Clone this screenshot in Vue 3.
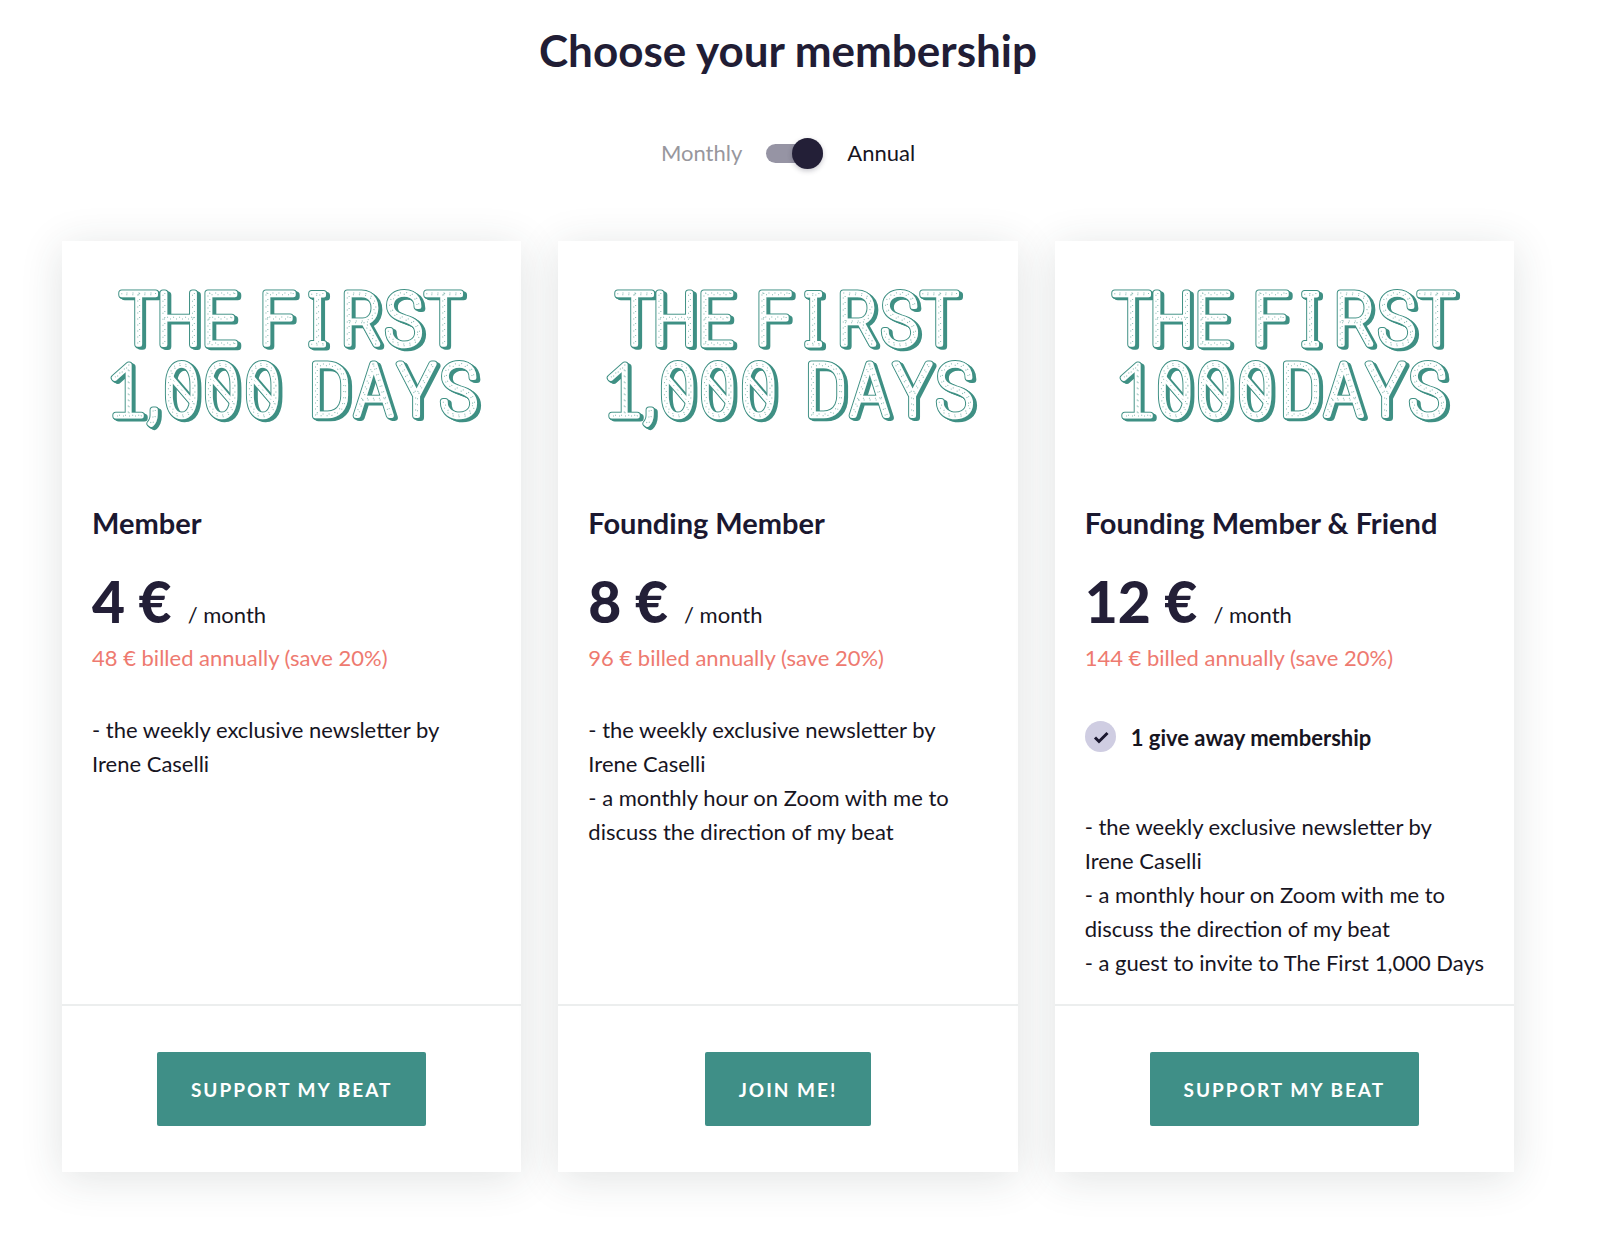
<script setup>
import { ref, computed } from 'vue'

const annual = ref(true)

const newsletter = '- the weekly exclusive newsletter by Irene\u00a0Caselli'
const zoomHour = '- a monthly hour on Zoom with me to discuss the direction of my beat'
const guest = '- a guest to invite to The First 1,000 Days'

const wideLogo = {
  label: 'The First 1,000 Days',
  digits: ',000 DAYS',
  x: '36 63 91 131 172 205 239 283 326 368',
  zeros: [91, 131, 172],
}
const tightLogo = {
  label: 'The First 1000 Days',
  digits: '000DAYS',
  x: '52 91 131 172 217 260 302 344',
  zeros: [91, 131, 172],
}

const plans = [
  { id: 'member', name: 'Member', yearly: 4, monthly: 5, logo: wideLogo, perks: [newsletter], action: 'Support my beat' },
  { id: 'founding', name: 'Founding Member', yearly: 8, monthly: 10, logo: wideLogo, perks: [newsletter, zoomHour], action: 'Join me!' },
  {
    id: 'friend', name: 'Founding Member & Friend', yearly: 12, monthly: 15, logo: tightLogo,
    bonus: '1 give away membership', perks: [newsletter, zoomHour, guest], action: 'Support my beat',
  },
]

const priced = computed(() => plans.map((p) => ({ ...p, price: annual.value ? p.yearly : p.monthly })))
</script>

<template>
  <main class="page">
    <h1 class="title">Choose your membership</h1>

    <div class="billing">
      <span :class="{ muted: annual }">Monthly</span>
      <input id="billing" v-model="annual" class="switch" type="checkbox" role="switch" />
      <label for="billing" :class="{ muted: !annual }">Annual</label>
    </div>

    <div class="plans">
      <article v-for="plan in priced" :key="plan.id" class="card">
        <div class="body">
          <svg class="logo" viewBox="3 -9 400 189" role="img" :aria-label="plan.logo.label">
            <g class="shade"><use :href="`#logo-${plan.id}`" x="3" y="2" /></g>
            <g class="shade"><use :href="`#logo-${plan.id}`" x="1" y="1" /></g>
            <g class="edge"><use :href="`#logo-${plan.id}`" /></g>
            <g class="face">
              <g :id="`logo-${plan.id}`">
                <text x="48 88 129 158 187 227 271 313 353" y="75">THE F<tspan class="slab">I</tspan>RST</text>
                <text :x="plan.logo.x" y="146"><tspan class="foot">1</tspan>{{ plan.logo.digits }}</text>
                <line v-for="x in plan.logo.zeros" :key="x" :x1="x - 12" y1="106" :x2="x + 12" y2="134" />
              </g>
            </g>
            <g class="dots"><use :href="`#logo-${plan.id}`" /></g>
          </svg>

          <h2 class="name">{{ plan.name }}</h2>
          <p class="price"><strong>{{ plan.price }} €</strong><span>/ month</span></p>
          <p v-show="annual" class="billed">{{ plan.yearly * 12 }} € billed annually (save 20%)</p>

          <p v-if="plan.bonus" class="bonus">
            <svg class="check" viewBox="0 0 31 31" aria-hidden="true">
              <circle cx="15.5" cy="15.5" r="15.5" />
              <path d="M10 16.5l4 4 8.500-8.500" />
            </svg>
            {{ plan.bonus }}
          </p>

          <div class="perks">
            <p v-for="perk in plan.perks" :key="perk">{{ perk }}</p>
          </div>
        </div>
        <footer class="foot-bar">
          <button type="button" class="action">{{ plan.action }}</button>
        </footer>
      </article>
    </div>
  </main>
</template>

<style>
body {
  margin: 0;
  background: #fff;
}
</style>

<style scoped>
.page {
  padding: 24px 86px 64px 62px;
  font-family: Lato, "Liberation Sans", sans-serif;
  font-size: 22px;
  line-height: 34px;
  color: #17151f;
}

h1, h2, p {
  margin: 0;
}

.title {
  font-size: 44px;
  line-height: 52px;
  font-weight: 700;
  text-align: center;
  color: #211d35;
}

.billing {
  display: flex;
  justify-content: center;
  align-items: center;
  gap: 24px;
  margin-top: 60px;
}

.muted {
  color: #98979d;
}

.switch {
  appearance: none;
  display: flex;
  align-items: center;
  justify-content: flex-start;
  width: 57px;
  height: 19px;
  margin: 0;
  border-radius: 10px;
  background: #9694a4;
  cursor: pointer;
}

.switch::before {
  content: "";
  width: 31px;
  height: 31px;
  border-radius: 50%;
  background: #231f37;
  box-shadow: 0 2px 5px rgba(35, 31, 55, 0.25);
}

.switch:checked {
  justify-content: flex-end;
}

.plans {
  display: grid;
  grid-template-columns: repeat(3, minmax(0, 1fr));
  gap: 37px;
  margin-top: 71px;
}

.card {
  display: flex;
  flex-direction: column;
  background: #fff;
  box-shadow: 0 6px 40px rgba(40, 60, 55, 0.14);
}

.body {
  flex: 1;
  padding: 20px 26px 24px 30px;
}

.logo {
  display: block;
  width: 100%;
  height: 189px;
}

.logo text {
  font-family: "Roboto Condensed", Roboto, sans-serif;
  font-size: 73px;
  font-weight: 100;
  text-anchor: middle;
}

.logo .slab {
  font-family: "Noto Sans", sans-serif;
}

.logo .foot {
  font-family: Lato, sans-serif;
}

.shade,
.edge,
.face,
.dots {
  stroke-linejoin: round;
}

.shade,
.edge {
  fill: #3f9084;
  stroke: #3f9084;
  stroke-width: 7px;
}

.face {
  fill: #fff;
  stroke: #fff;
  stroke-width: 5px;
}

.dots {
  fill: none;
  stroke: #8bbcb4;
  stroke-width: 1px;
  stroke-dasharray: 1 5;
}

.name {
  margin-top: 55px;
  font-size: 29px;
  line-height: 36px;
  font-weight: 700;
  color: #1b1830;
}

.price {
  display: flex;
  align-items: baseline;
  gap: 16px;
  margin-top: 26px;
}

.price strong {
  font-size: 57px;
  line-height: 68px;
  font-weight: 900;
  color: #231f37;
}

.billed {
  margin-top: 6px;
  color: #ee7a70;
}

.bonus {
  display: flex;
  align-items: flex-start;
  gap: 15px;
  margin-top: 46px;
  font-weight: 700;
}

.check {
  flex: none;
  width: 31px;
  height: 31px;
}

.check circle {
  fill: #cfcde2;
}

.check path {
  fill: none;
  stroke: #1b1830;
  stroke-width: 3;
}

.perks {
  margin-top: 38px;
}

.bonus + .perks {
  margin-top: 55px;
}

.foot-bar {
  display: flex;
  justify-content: center;
  padding: 46px 0;
  border-top: 2px solid #eceeee;
}

.action {
  height: 74px;
  padding: 0 34px;
  border: 0;
  border-radius: 2px;
  background: #3f8f87;
  color: #fff;
  font-family: inherit;
  font-size: 19px;
  font-weight: 700;
  letter-spacing: 2px;
  text-transform: uppercase;
  cursor: pointer;
}
</style>
